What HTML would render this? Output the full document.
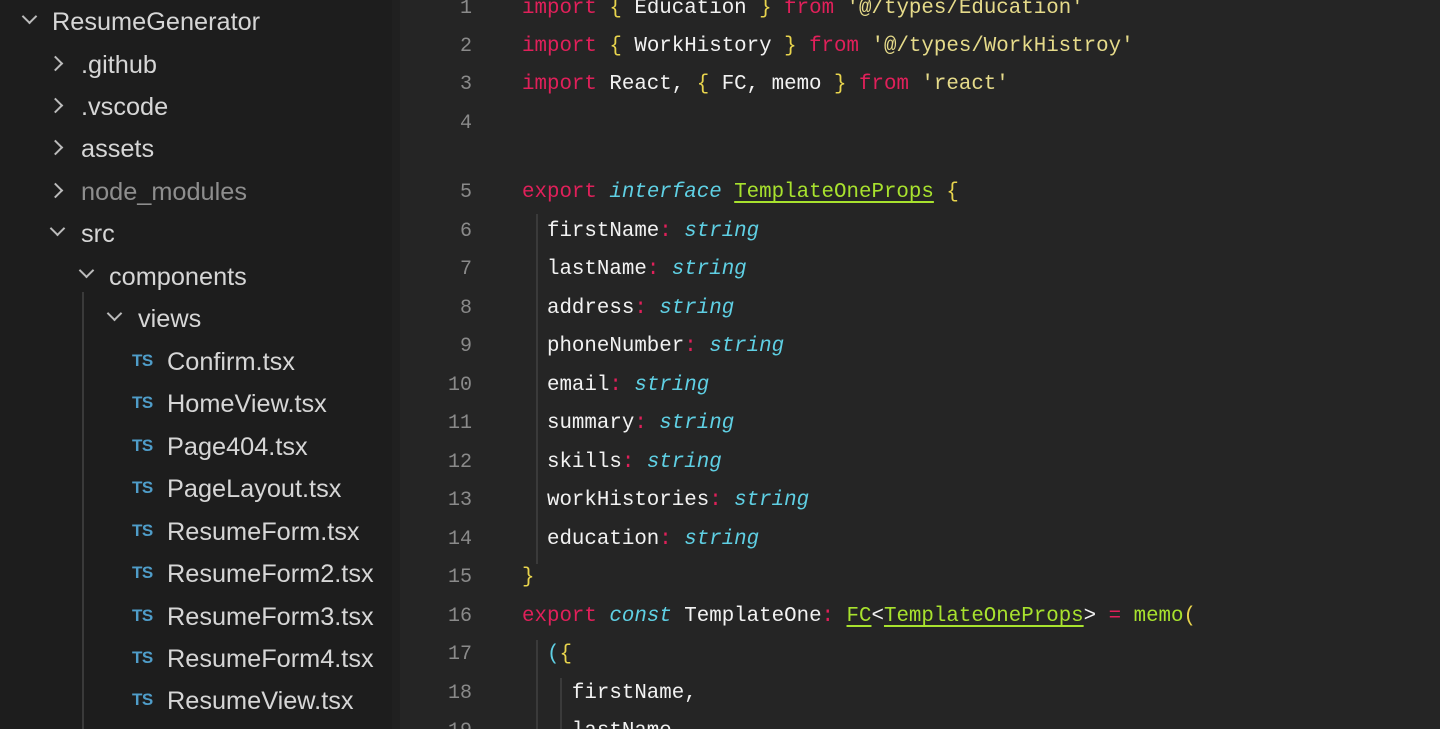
<!DOCTYPE html>
<html><head><meta charset="utf-8"><style>
*{margin:0;padding:0;box-sizing:border-box}
html{width:1440px;height:729px;overflow:hidden}
body{width:1440px;height:729px;overflow:hidden;background:#252525;position:relative;font-family:"Liberation Sans",sans-serif}
#side{position:absolute;left:0;top:0;width:392px;height:729px;background:#1d1d1d}
#band{position:absolute;left:392px;top:0;width:8px;height:729px;background:#202020}
.r{position:absolute;font-size:25.3px;color:#d6d6d6;white-space:nowrap;line-height:30px}
.r.dim{color:#8e8e8e}
.ch{position:absolute;width:11px;height:11px;border-right:2px solid #bbb;border-bottom:2px solid #bbb}
.ts{position:absolute;font-size:17px;font-weight:bold;color:#4f9dc9;letter-spacing:-0.5px;line-height:30px}
.guide{position:absolute;width:2px;background:#3a3a3a}
.ln{position:absolute;width:60px;left:412px;text-align:right;font-family:"Liberation Mono",monospace;font-size:20px;color:#8a8a8a;line-height:30px}
.c{position:absolute;left:522px;font-family:"Liberation Mono",monospace;font-size:20.8px;color:#f2f2f2;white-space:pre;line-height:30px}
.k{color:#e0205a}.t{color:#5fd0e4;font-style:italic}.g{color:#a8e22e;text-decoration:underline;text-underline-offset:4px}
.y{color:#e8d44d}.s{color:#e6db8a}.p{color:#e0205a}.gn{color:#a8e22e}.cy{color:#5fd0e4}
</style></head><body>
<div id="side"></div><div id="band"></div>
<div class="guide" style="left:82px;top:292px;height:437px"></div>
<div class="guide" style="left:536px;top:214px;height:350px"></div>
<div class="guide" style="left:536px;top:640px;height:89px"></div>
<div class="guide" style="left:560px;top:678px;height:51px"></div>

<div class="ch" style="left:24px;top:11px;transform:rotate(45deg)"></div>
<div class="r" style="left:52px;top:7px">ResumeGenerator</div>
<div class="ch" style="left:50px;top:58px;transform:rotate(-45deg)"></div>
<div class="r" style="left:81px;top:50px">.github</div>
<div class="ch" style="left:50px;top:100px;transform:rotate(-45deg)"></div>
<div class="r" style="left:81px;top:92px">.vscode</div>
<div class="ch" style="left:50px;top:142px;transform:rotate(-45deg)"></div>
<div class="r" style="left:81px;top:134px">assets</div>
<div class="ch" style="left:50px;top:185px;transform:rotate(-45deg)"></div>
<div class="r dim" style="left:81px;top:177px">node_modules</div>
<div class="ch" style="left:52px;top:223px;transform:rotate(45deg)"></div>
<div class="r" style="left:81px;top:219px">src</div>
<div class="ch" style="left:81px;top:265px;transform:rotate(45deg)"></div>
<div class="r" style="left:109px;top:262px">components</div>
<div class="ch" style="left:109px;top:308px;transform:rotate(45deg)"></div>
<div class="r" style="left:138px;top:304px">views</div>

<div class="ts" style="left:132px;top:346px">TS</div><div class="r" style="left:167px;top:347px">Confirm.tsx</div>
<div class="ts" style="left:132px;top:388px">TS</div><div class="r" style="left:167px;top:389px">HomeView.tsx</div>
<div class="ts" style="left:132px;top:431px">TS</div><div class="r" style="left:167px;top:432px">Page404.tsx</div>
<div class="ts" style="left:132px;top:473px">TS</div><div class="r" style="left:167px;top:474px">PageLayout.tsx</div>
<div class="ts" style="left:132px;top:516px">TS</div><div class="r" style="left:167px;top:517px">ResumeForm.tsx</div>
<div class="ts" style="left:132px;top:558px">TS</div><div class="r" style="left:167px;top:559px">ResumeForm2.tsx</div>
<div class="ts" style="left:132px;top:601px">TS</div><div class="r" style="left:167px;top:602px">ResumeForm3.tsx</div>
<div class="ts" style="left:132px;top:643px">TS</div><div class="r" style="left:167px;top:644px">ResumeForm4.tsx</div>
<div class="ts" style="left:132px;top:685px">TS</div><div class="r" style="left:167px;top:686px">ResumeView.tsx</div>

<div class="ln" style="top:-6px">1</div><div class="c" style="top:-6px"><span class="k">import</span> <span class="y">{</span> Education <span class="y">}</span> <span class="k">from</span> <span class="s">'@/types/Education'</span></div>
<div class="ln" style="top:32px">2</div><div class="c" style="top:32px"><span class="k">import</span> <span class="y">{</span> WorkHistory <span class="y">}</span> <span class="k">from</span> <span class="s">'@/types/WorkHistroy'</span></div>
<div class="ln" style="top:70px">3</div><div class="c" style="top:70px"><span class="k">import</span> React, <span class="y">{</span> FC, memo <span class="y">}</span> <span class="k">from</span> <span class="s">'react'</span></div>
<div class="ln" style="top:109px">4</div>
<div class="ln" style="top:178px">5</div><div class="c" style="top:178px"><span class="k">export</span> <span class="t">interface</span> <span class="g">TemplateOneProps</span> <span class="y">{</span></div>
<div class="ln" style="top:217px">6</div><div class="c" style="top:217px">  firstName<span class="p">:</span> <span class="t">string</span></div>
<div class="ln" style="top:255px">7</div><div class="c" style="top:255px">  lastName<span class="p">:</span> <span class="t">string</span></div>
<div class="ln" style="top:294px">8</div><div class="c" style="top:294px">  address<span class="p">:</span> <span class="t">string</span></div>
<div class="ln" style="top:332px">9</div><div class="c" style="top:332px">  phoneNumber<span class="p">:</span> <span class="t">string</span></div>
<div class="ln" style="top:371px">10</div><div class="c" style="top:371px">  email<span class="p">:</span> <span class="t">string</span></div>
<div class="ln" style="top:409px">11</div><div class="c" style="top:409px">  summary<span class="p">:</span> <span class="t">string</span></div>
<div class="ln" style="top:448px">12</div><div class="c" style="top:448px">  skills<span class="p">:</span> <span class="t">string</span></div>
<div class="ln" style="top:486px">13</div><div class="c" style="top:486px">  workHistories<span class="p">:</span> <span class="t">string</span></div>
<div class="ln" style="top:525px">14</div><div class="c" style="top:525px">  education<span class="p">:</span> <span class="t">string</span></div>
<div class="ln" style="top:563px">15</div><div class="c" style="top:563px"><span class="y">}</span></div>
<div class="ln" style="top:602px">16</div><div class="c" style="top:602px"><span class="k">export</span> <span class="t">const</span> TemplateOne<span class="p">:</span> <span class="g">FC</span>&lt;<span class="g">TemplateOneProps</span>&gt; <span class="p">=</span> <span class="gn">memo</span><span class="y">(</span></div>
<div class="ln" style="top:640px">17</div><div class="c" style="top:640px">  <span class="cy">(</span><span class="y">{</span></div>
<div class="ln" style="top:679px">18</div><div class="c" style="top:679px">    firstName,</div>
<div class="ln" style="top:717px">19</div><div class="c" style="top:717px">    lastName,</div>
</body></html>
